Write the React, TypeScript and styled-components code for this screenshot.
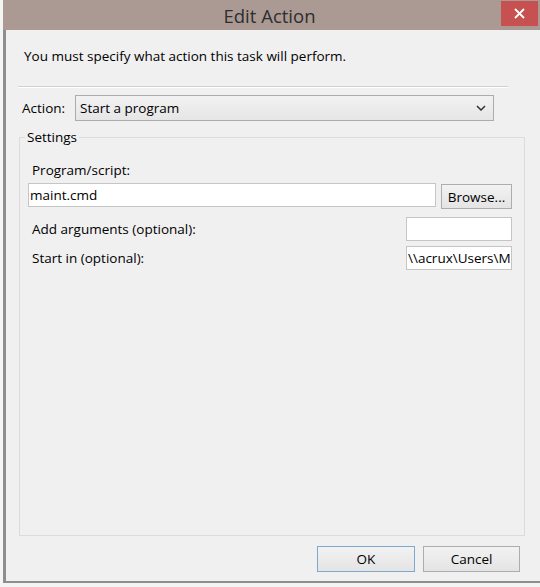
import * as React from 'react';
import styled, { createGlobalStyle } from 'styled-components';

const GlobalStyle = createGlobalStyle`
  html, body {
    margin: 0;
    padding: 0;
  }
  body {
    background: #f4f4f4;
    font-family: "Open Sans", "Noto Sans", sans-serif;
    color: #000;
  }
`;

const Screen = styled.div`
  width: 540px;
  height: 587px;
  overflow: hidden;
  box-sizing: border-box;
  padding-left: 3px;
  background: #f4f4f4;
`;

const Window = styled.div`
  display: flex;
  flex-direction: column;
  height: 583px;
`;

const TitleBar = styled.div`
  height: 30px;
  flex: none;
  background: #ab9a94;
  display: grid;
  grid-template-columns: 1fr auto 1fr;
  align-items: start;
`;

const Title = styled.div`
  grid-column: 2;
  font-size: 18.5px;
  line-height: 31px;
  color: #2e2e2e;
  margin-right: 4px;
`;

const CloseButton = styled.div`
  grid-column: 3;
  justify-self: end;
  width: 37px;
  height: 25px;
  margin: 1px 2px 0 0;
  background: #c75050;
  display: flex;
  align-items: center;
  justify-content: center;
`;

const Client = styled.div`
  flex: 1;
  min-height: 0;
  display: flex;
  flex-direction: column;
  background: #f0f0f0;
  border-left: 3px solid #8e8e8e;
  border-bottom: 2px solid #8e8e8e;
`;

const Instruction = styled.div`
  margin: 16px 0 0 18px;
  font-size: 13.5px;
  line-height: 20px;
`;

const Separator = styled.div`
  margin: 20px 0 0 12px;
  width: 490px;
  border-top: 1px solid #d0d0d0;
  border-bottom: 1px solid #ffffff;
`;

const ActionRow = styled.div`
  display: flex;
  align-items: center;
  margin: 7px 0 0 16px;
`;

const Label = styled.span<{ $indent?: number }>`
  font-size: 13.5px;
  line-height: 20px;
  margin-left: ${p => p.$indent ?? 0}px;
  white-space: nowrap;
`;

const ActionLabel = styled(Label)`
  width: 53px;
`;

const Combo = styled.div`
  box-sizing: border-box;
  width: 419px;
  height: 26px;
  display: flex;
  align-items: center;
  justify-content: space-between;
  padding: 0 7px 0 4px;
  border: 1px solid #acacac;
  background: linear-gradient(#f2f2f2, #e6e6e6);
  font-size: 13.5px;
`;

const Group = styled.fieldset`
  flex: 1;
  min-height: 0;
  min-width: 0;
  box-sizing: border-box;
  width: 506px;
  margin: 6px 0 0 13px;
  padding: 0 0 0 8px;
  border: 1px solid #dcdcdc;
`;

const Legend = styled.legend`
  font-size: 13.5px;
  line-height: 20px;
  padding: 0 2px;
  margin-left: -3px;
`;

const StackLabel = styled(Label)`
  display: block;
  margin-top: 13px;
`;

const PathRow = styled.div`
  display: flex;
  align-items: flex-start;
  gap: 5px;
  margin-top: 3px;
`;

const OptionRow = styled.div<{ $gap: number }>`
  width: 484px;
  display: flex;
  align-items: center;
  justify-content: space-between;
  margin-top: ${p => p.$gap}px;
`;

const TextBox = styled.input<{ $width: number }>`
  box-sizing: border-box;
  width: ${p => p.$width}px;
  height: 24px;
  margin: 0;
  padding: 0 1px;
  border: 1px solid #c5c5c5;
  background: #fff;
  font: inherit;
  font-size: 13.5px;
  color: #000;
  outline: none;
`;

const Button = styled.button<{ $width: number; $default?: boolean }>`
  box-sizing: border-box;
  width: ${p => p.$width}px;
  height: 26px;
  margin: 0;
  padding: 0;
  border: 1px solid ${p => (p.$default ? '#7ea9cf' : '#adadad')};
  background: linear-gradient(#f2f2f2, #e4e4e4);
  font: inherit;
  font-size: 13.5px;
  color: #000;
`;

const BrowseButton = styled(Button)`
  height: 25px;
  margin-top: 1px;
`;

const ButtonBar = styled.div`
  display: flex;
  justify-content: flex-end;
  gap: 8px;
  margin: 10px 20px 9px 0;
`;

export default function App() {
  return (
    <Screen>
      <GlobalStyle />
      <Window>
        <TitleBar>
          <Title>Edit Action</Title>
          <CloseButton>
            <svg width="11" height="11" viewBox="0 0 11 11">
              <path d="M1 1 L10 10 M10 1 L1 10" stroke="#fff" strokeWidth="1.8" />
            </svg>
          </CloseButton>
        </TitleBar>
        <Client>
          <Instruction>You must specify what action this task will perform.</Instruction>
          <Separator />
          <ActionRow>
            <ActionLabel>Action:</ActionLabel>
            <Combo>
              <span>Start a program</span>
              <svg width="10" height="6" viewBox="0 0 10 6">
                <polyline points="1,1 5,5 9,1" fill="none" stroke="#333" strokeWidth="1.5" />
              </svg>
            </Combo>
          </ActionRow>
          <Group>
            <Legend>Settings</Legend>
            <StackLabel $indent={4}>Program/script:</StackLabel>
            <PathRow>
              <TextBox $width={408} readOnly defaultValue="maint.cmd" />
              <BrowseButton $width={71}>Browse...</BrowseButton>
            </PathRow>
            <OptionRow $gap={8}>
              <Label $indent={4}>Add arguments (optional):</Label>
              <TextBox $width={106} readOnly defaultValue="" />
            </OptionRow>
            <OptionRow $gap={5}>
              <Label $indent={4}>Start in (optional):</Label>
              <TextBox $width={106} readOnly defaultValue={'\\\\acrux\\Users\\Maintenance'} />
            </OptionRow>
          </Group>
          <ButtonBar>
            <Button $width={98} $default>OK</Button>
            <Button $width={97}>Cancel</Button>
          </ButtonBar>
        </Client>
      </Window>
    </Screen>
  );
}
